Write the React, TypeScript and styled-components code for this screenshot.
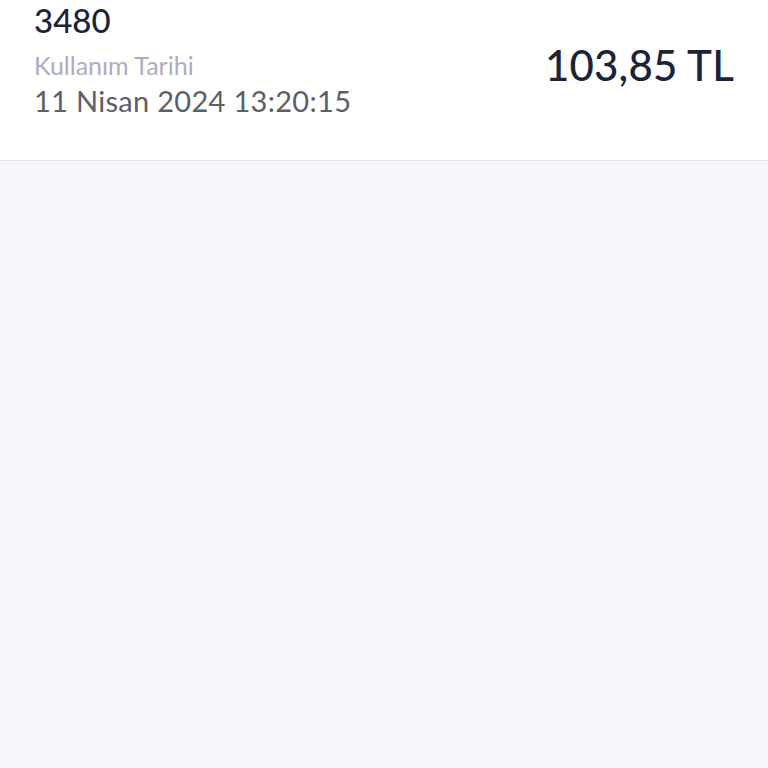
import * as React from "react";
import styled, { createGlobalStyle } from "styled-components";

const GlobalStyle = createGlobalStyle`
  html, body {
    margin: 0;
    padding: 0;
    background: #f7f8fb;
    font-family: Lato, "Noto Sans", sans-serif;
  }
`;

const Page = styled.div`
  min-height: 768px;
  background: #f7f8fb;
`;

const Card = styled.div`
  display: flex;
  justify-content: space-between;
  align-items: flex-start;
  padding: 2px 34px 42px 34px;
  background: #ffffff;
  border-bottom: 1px solid #e4e6ec;
`;

const Info = styled.div`
  display: flex;
  flex-direction: column;
`;

const Code = styled.div`
  font-size: 33px;
  line-height: 36px;
  font-weight: 500;
  color: #1e2236;
  margin-bottom: 12px;
`;

const Label = styled.div`
  font-size: 25px;
  line-height: 30px;
  color: #adacc5;
  margin-bottom: 4px;
`;

const DateText = styled.div`
  font-size: 29px;
  line-height: 34px;
  color: #5b5f6a;
  letter-spacing: 0.3px;
`;

const Amount = styled.div`
  margin-top: 38px;
  font-size: 42px;
  line-height: 50px;
  font-weight: 500;
  color: #1d2237;
  letter-spacing: 0.2px;
`;

export default function App() {
  return (
    <Page>
      <GlobalStyle />
      <Card>
        <Info>
          <Code>3480</Code>
          <Label>Kullanım Tarihi</Label>
          <DateText>11 Nisan 2024 13:20:15</DateText>
        </Info>
        <Amount>103,85 TL</Amount>
      </Card>
    </Page>
  );
}
